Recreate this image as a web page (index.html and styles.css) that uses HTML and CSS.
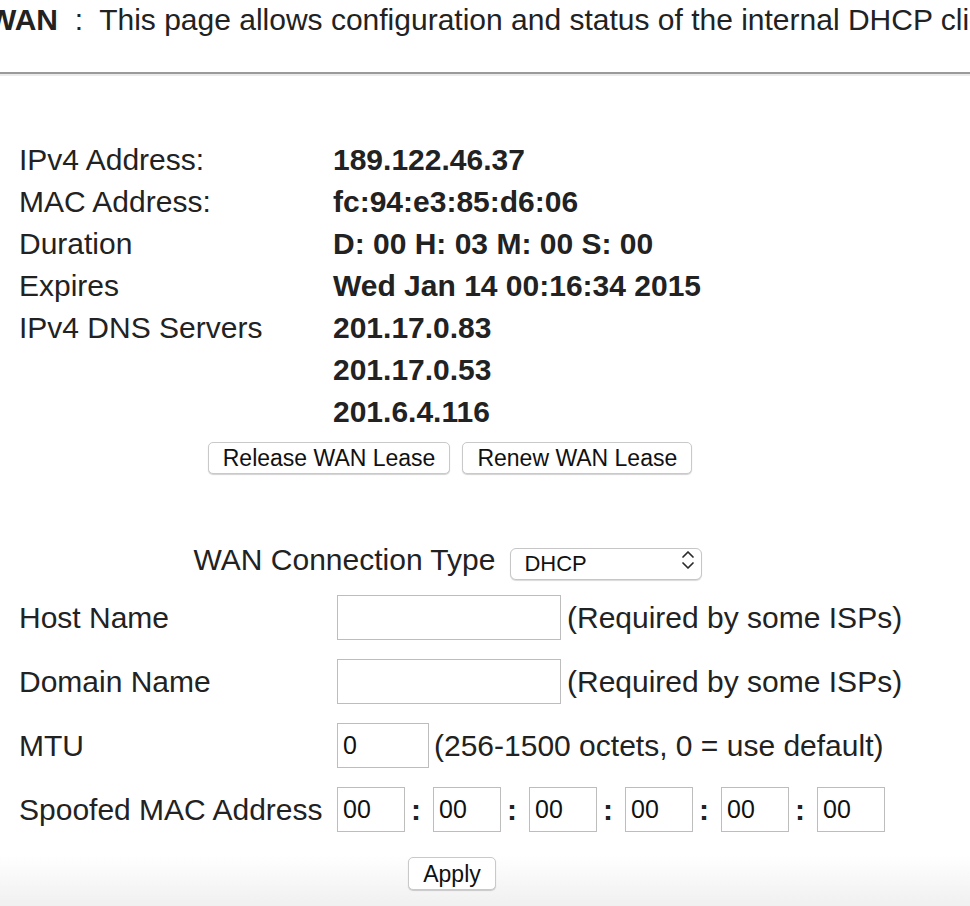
FILE: index.html
```html
<!DOCTYPE html>
<html lang="en">
<head>
<meta charset="utf-8">
<title>WAN</title>
<link rel="stylesheet" href="styles.css">
</head>
<body>
<div class="page">
  <div class="header">
    <span class="title"><b>WAN</b>&nbsp; :&nbsp; This page allows configuration and status of the internal DHCP client.</span>
  </div>
  <div class="rule"></div>

  <div class="info">
    <div class="k">IPv4 Address:</div><div class="v">189.122.46.37</div>
    <div class="k">MAC Address:</div><div class="v">fc:94:e3:85:d6:06</div>
    <div class="k">Duration</div><div class="v">D: 00 H: 03 M: 00 S: 00</div>
    <div class="k">Expires</div><div class="v">Wed Jan 14 00:16:34 2015</div>
    <div class="k">IPv4 DNS Servers</div><div class="v">201.17.0.83</div>
    <div class="k"></div><div class="v">201.17.0.53</div>
    <div class="k"></div><div class="v">201.6.4.116</div>
  </div>

  <div class="lease-actions">
    <button class="btn" type="button">Release WAN Lease</button>
    <button class="btn" type="button">Renew WAN Lease</button>
  </div>

  <div class="conn-type">
    <label class="conn-label" for="ctype">WAN Connection Type</label>
    <div class="select-wrap">
      <select id="ctype" class="select"><option>DHCP</option></select>
      <svg class="chev" width="14" height="24" viewBox="0 0 14 24" aria-hidden="true">
        <path d="M2 9 L7 4 L12 9" fill="none" stroke="#2a2a2a" stroke-width="1.7" stroke-linecap="round" stroke-linejoin="round"/>
        <path d="M2 15 L7 20 L12 15" fill="none" stroke="#2a2a2a" stroke-width="1.7" stroke-linecap="round" stroke-linejoin="round"/>
      </svg>
    </div>
  </div>

  <div class="form">
    <div class="row">
      <div class="label">Host Name</div>
      <div class="field"><input class="inp inp-wide" type="text" value=""><span class="hint">(Required by some ISPs)</span></div>
    </div>
    <div class="row">
      <div class="label">Domain Name</div>
      <div class="field"><input class="inp inp-wide" type="text" value=""><span class="hint">(Required by some ISPs)</span></div>
    </div>
    <div class="row">
      <div class="label">MTU</div>
      <div class="field"><input class="inp inp-mtu" type="text" value="0"><span class="hint hint-mtu">(256-1500 octets, 0 = use default)</span></div>
    </div>
    <div class="row">
      <div class="label">Spoofed MAC Address</div>
      <div class="field">
        <input class="inp inp-mac" type="text" value="00"><span class="colon">:</span>
        <input class="inp inp-mac" type="text" value="00"><span class="colon">:</span>
        <input class="inp inp-mac" type="text" value="00"><span class="colon">:</span>
        <input class="inp inp-mac" type="text" value="00"><span class="colon">:</span>
        <input class="inp inp-mac" type="text" value="00"><span class="colon">:</span>
        <input class="inp inp-mac" type="text" value="00">
      </div>
    </div>
  </div>

  <div class="apply-row">
    <button class="btn btn-apply" type="button">Apply</button>
  </div>
</div>
</body>
</html>
```

FILE: styles.css
```css
html, body {
  margin: 0;
  padding: 0;
  overflow: hidden;
}

body {
  width: 970px;
  min-height: 906px;
  background: linear-gradient(to bottom, #ffffff 0, #ffffff 855px, #f0f0f0 906px);
  font-family: "Liberation Sans", Arial, Helvetica, sans-serif;
  color: #222;
  font-size: 30px;
}

.page {
  width: 900px;
}

.header {
  padding-top: 2px;
  height: 36px;
  line-height: 36px;
  white-space: nowrap;
  margin-left: -12px;
  font-size: 30px;
}

.title b {
  font-weight: bold;
}

.rule {
  margin-top: 34px;
  width: 970px;
  height: 0;
  border-top: 2px solid #9a9a9a;
  border-bottom: 2px solid #ebebeb;
}

.info {
  margin-top: 63px;
  padding-left: 19px;
  display: grid;
  grid-template-columns: 314px auto;
  line-height: 42px;
}

.info .v {
  font-weight: bold;
}

.lease-actions {
  margin-top: 9px;
  display: flex;
  justify-content: center;
  gap: 12px;
}

.btn {
  font-family: "Liberation Sans", Arial, Helvetica, sans-serif;
  font-size: 23px;
  color: #111;
  background: #fff;
  border: 1px solid #c9c9c9;
  border-radius: 5px;
  box-shadow: 0 1px 1px rgba(0, 0, 0, 0.18);
  height: 32px;
  padding: 0 14px;
  line-height: 30px;
  margin: 0;
}

.conn-type {
  margin-top: 70px;
  display: flex;
  justify-content: center;
  align-items: center;
  gap: 15px;
  height: 32px;
  margin-left: -4px;
}

.conn-label {
  line-height: 32px;
}

.select-wrap {
  position: relative;
  width: 192px;
  height: 32px;
}

.select {
  appearance: none;
  -webkit-appearance: none;
  box-sizing: border-box;
  width: 192px;
  height: 32px;
  margin: 0;
  padding: 0 0 0 13px;
  font-family: "Liberation Sans", Arial, Helvetica, sans-serif;
  font-size: 22px;
  color: #111;
  background: #fff;
  border: 1px solid #c6c6c6;
  border-radius: 6px;
  box-shadow: 0 1px 1px rgba(0, 0, 0, 0.15);
  outline: none;
}

.chev {
  position: absolute;
  right: 7px;
  top: 4px;
  pointer-events: none;
}

.form {
  margin-top: 19px;
  display: flex;
  flex-direction: column;
  gap: 19px;
}

.row {
  display: grid;
  grid-template-columns: 318px auto;
  padding-left: 19px;
  height: 45px;
  align-items: center;
}

.field {
  display: flex;
  align-items: center;
  white-space: nowrap;
}

.inp {
  box-sizing: border-box;
  height: 45px;
  margin: 0;
  padding: 0 5px;
  border: 1px solid #bdbdbd;
  border-radius: 0;
  background: #fff;
  font-family: "Liberation Sans", Arial, Helvetica, sans-serif;
  font-size: 25px;
  color: #111;
  outline: none;
}

.inp-wide {
  width: 224px;
}

.inp-mtu {
  width: 92px;
}

.inp-mac {
  width: 68px;
}

.hint {
  margin-left: 6px;
}

.hint-mtu {
  margin-left: 5px;
}

.colon {
  box-sizing: border-box;
  width: 28px;
  padding-left: 6px;
  font-weight: bold;
}

.apply-row {
  margin-top: 25px;
  display: flex;
  justify-content: center;
  margin-left: 4px;
}

.btn-apply {
  height: 33px;
  padding: 0 14px;
}
```
